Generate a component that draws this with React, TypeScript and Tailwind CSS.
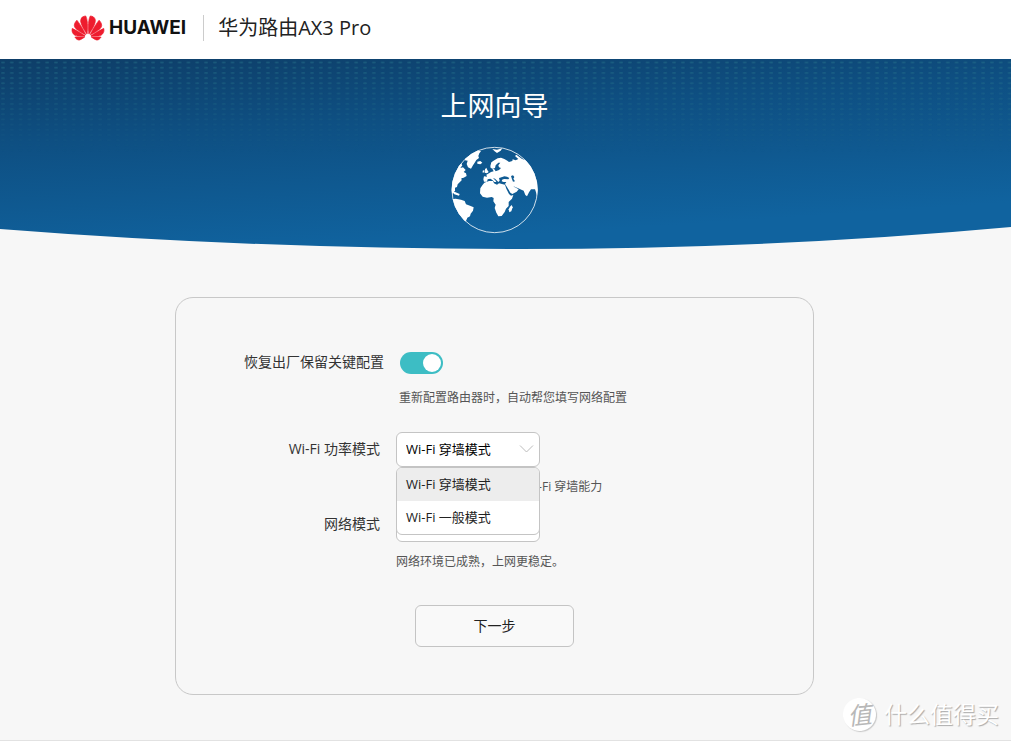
import React, { useState } from 'react';
import { SiHuawei } from 'react-icons/si';

const POWER_MODES = ['Wi-Fi 穿墙模式', 'Wi-Fi 一般模式'];

const BannerBackground: React.FC = () => (
  <svg className="absolute inset-0 h-full w-full" viewBox="0 0 1011 190" preserveAspectRatio="none" aria-hidden="true">
    <defs>
      <linearGradient id="sea" gradientUnits="userSpaceOnUse" x1="0" y1="0" x2="14" y2="210">
        <stop offset="0" stopColor="#0e3e68" />
        <stop offset="0.4" stopColor="#0e4f82" />
        <stop offset="1" stopColor="#10639f" />
      </linearGradient>
      <linearGradient id="fade" x1="0" y1="0" x2="0" y2="1">
        <stop offset="0" stopColor="#fff" />
        <stop offset="0.5" stopColor="#000" />
      </linearGradient>
      <pattern id="dots" width="8.83" height="5.17" patternUnits="userSpaceOnUse">
        <ellipse cx="3" cy="3.6" rx="2" ry="1" fill="#2b7a8f" opacity="0.45" />
      </pattern>
      <mask id="dotFade">
        <rect width="1011" height="190" fill="url(#fade)" />
      </mask>
    </defs>
    <path d="M0 0H1011V168Q770 190 520 190Q255 190 0 170Z" fill="url(#sea)" />
    <rect width="1011" height="120" fill="url(#dots)" mask="url(#dotFade)" />
  </svg>
);

const Globe: React.FC = () => (
  <svg className="h-[88px] w-[88px]" viewBox="62 198 264 264" aria-hidden="true">
    <defs>
      <clipPath id="disc">
        <circle cx="193" cy="330" r="129" />
      </clipPath>
    </defs>
    <g clipPath="url(#disc)" fill="#fff">
      <path d="M103 234L118 220L138 210L152 214L147 220L144 228L146 234L138 240L133 248L128 256L122 266L113 262L109 252L112 242L104 241Z" />
      <path d="M58 272L78 260L84 254L92 250L96 256L90 264L98 262L106 270L100 276L107 280L109 288L100 293L93 295L94 301L88 307L82 313L80 321L74 323L74 332L60 347Z" />
      <path d="M64 334L74 336L88 342L86 347L72 343Z" />
      <path d="M58 358L76 356L92 359L103 363L107 373L119 377L130 382L128 392L121 401L119 409L111 413L107 423L101 427L97 441L60 440Z" />
      <path d="M141 245L150 243L156 248L150 253L141 251Z" />
      <path d="M186 207L200 209L216 205L211 212L200 219L193 214Z" />
      <path d="M164 268L168 263L171 270L175 276L170 280L163 278Z" />
      <path d="M157 272L162 270L162 277L157 278Z" />
      <path d="M180 258L183 247L192 241L202 235L212 233L222 237L231 242L236 246L246 243L247 238L256 241L264 237L254 228L258 224L274 236L292 244L330 280V350L320 346L314 328L302 328L296 337L290 349L285 345L280 332L270 328L262 324L256 322L248 318L244 314L252 321L258 324L265 328L259 335L246 342L240 338L234 328L228 318L224 312L228 306L220 306L214 304L216 298L222 294L214 292L206 294L208 302L204 306L198 300L194 296L188 294L196 302L198 306L192 306L186 300L180 296L172 298L170 305L161 305L159 298L161 289L170 290L168 284L176 280L182 276L190 274L186 266L192 268L196 274L206 270L212 264L206 262L204 256L210 248L204 248L196 256L194 264L188 266L181 264Z" />
      <path d="M162 308L176 303L188 303L191 310L200 314L206 310L224 314L228 326L236 342L242 347L249 345L245 356L235 366L235 378L227 386L223 396L214 408L204 409L198 398L193 384L196 374L189 364L190 354L184 351L170 353L157 350L149 340L150 325L156 316Z" />
      <path d="M244 375L247 382L243 394L237 397L235 388L239 380Z" />
    </g>
    <path d="M214 292L222 289L230 290L237 294L234 298L222 297L213 299ZM242 288L248 286L252 291L249 296L254 304L248 305L245 298Z" fill="#105b93" />
    <circle cx="193" cy="330" r="128" fill="none" stroke="#fff" strokeOpacity="0.8" strokeWidth="3" />
  </svg>
);

const Watermark: React.FC = () => (
  <div className="flex items-center justify-end gap-2 pr-[12px]">
    <span className="flex h-[33px] w-[33px] -rotate-6 items-center justify-center rounded-full bg-white text-2xl text-[#b8b8b8] italic shadow-[1px_1px_1px_#c8c8c8]">值</span>
    <span className="text-[23px] leading-9 text-white [text-shadow:1px_1px_1px_#aaa]">什么值得买</span>
  </div>
);

const App: React.FC = () => {
  const [keepConfig, setKeepConfig] = useState(true);
  const [powerMode, setPowerMode] = useState(POWER_MODES[0]);
  const [isOpen, setIsOpen] = useState(true);

  const handleSelect = (mode: string) => {
    setPowerMode(mode);
    setIsOpen(false);
  };

  return (
    <div className="min-h-screen bg-[#f7f7f7] font-['Open_Sans','Noto_Sans_CJK_SC',sans-serif] text-sm text-[#333]">
      <header className="flex h-[59px] items-center bg-white pb-1 pl-[72px]">
        <SiHuawei className="h-8 w-8 overflow-visible text-[#ee1c2e]" strokeWidth={0.5} />
        <span className="ml-[5px] font-['Inter',sans-serif] text-[19px] font-bold text-[#111]">HUAWEI</span>
        <span className="ml-[17px] h-[26px] w-px bg-[#ccc]" />
        <h1 className="ml-[14px] text-xl text-[#222]">华为路由AX3 Pro</h1>
      </header>

      <section className="relative h-[190px]">
        <BannerBackground />
        <div className="relative flex flex-col items-center pt-[27px] pr-[22px]">
          <h2 className="text-[27px] leading-10 text-white">上网向导</h2>
          <div className="mt-5">
            <Globe />
          </div>
        </div>
      </section>

      <main className="pt-12 pr-[22px]">
        <form className="mx-auto max-w-[639px] rounded-[18px] border border-[#c8c8c8] pt-[54px] pb-[47px]" onSubmit={(e) => e.preventDefault()}>
          <div className="flex items-center gap-4">
            <label htmlFor="keepConfig" className="w-[208px] pb-[2px] text-right leading-5">恢复出厂保留关键配置</label>
            <input
              id="keepConfig"
              type="checkbox"
              role="switch"
              checked={keepConfig}
              onChange={(e) => setKeepConfig(e.target.checked)}
              className="h-[22px] w-[43px] appearance-none rounded-full bg-gray-300 p-[2px] before:block before:h-[18px] before:w-[18px] before:rounded-full before:bg-white checked:bg-[#3dbdc4] checked:before:ml-auto"
            />
          </div>
          <p className="mt-4 pl-[223px] text-xs text-[#555]">重新配置路由器时，自动帮您填写网络配置</p>

          <div className="mt-[26px] flex items-center gap-4">
            <label htmlFor="powerMode" className="w-[204px] pb-[2px] text-right">Wi-Fi 功率模式</label>
            <div className="relative w-36">
              <select
                id="powerMode"
                value={powerMode}
                onChange={(e) => handleSelect(e.target.value)}
                onClick={() => setIsOpen(!isOpen)}
                className="block h-[35px] w-full appearance-none rounded-md border border-[#c4c4c4] bg-white px-[9px] text-[13px] text-black"
              >
                {POWER_MODES.map((mode) => <option key={mode}>{mode}</option>)}
              </select>
              <svg className="pointer-events-none absolute top-[13px] right-[6px] h-2 w-[15px]" viewBox="0 0 15 8" fill="none" stroke="#bbb" aria-hidden="true">
                <path d="M1 0.5L7.5 7L14 0.5" />
              </svg>
              {isOpen && (
                <ul role="listbox" className="absolute top-full left-0 z-10 w-full overflow-hidden rounded-md border border-[#c4c4c4] bg-white text-[13px] text-[#222]">
                  {POWER_MODES.map((mode) => (
                    <li
                      key={mode}
                      role="option"
                      aria-selected={mode === powerMode}
                      onClick={() => handleSelect(mode)}
                      className="h-[33px] px-[9px] leading-[33px] aria-selected:bg-[#ededed]"
                    >
                      {mode}
                    </li>
                  ))}
                </ul>
              )}
            </div>
          </div>
          <p className="mt-3 pl-[348px] text-xs text-[#555]">Wi-Fi 穿墙能力</p>

          <div className="mt-3 flex items-center gap-4">
            <label htmlFor="networkMode" className="w-[204px] pb-[2px] text-right">网络模式</label>
            <select id="networkMode" className="h-[35px] w-36 appearance-none rounded-md border border-[#c4c4c4] bg-white px-[9px] text-[13px] text-black" />
          </div>
          <p className="mt-3 pl-[220px] text-xs text-[#555]">网络环境已成熟，上网更稳定。</p>

          <button type="submit" className="mx-auto mt-[35px] block h-[42px] w-[159px] rounded-md border border-[#c4c4c4] bg-[#f9f9f9] text-[#222] hover:bg-white">下一步</button>
        </form>
      </main>

      <footer className="border-b border-[#e2e2e2] pt-[1px] pb-2">
        <Watermark />
      </footer>
    </div>
  );
};

export default App;
